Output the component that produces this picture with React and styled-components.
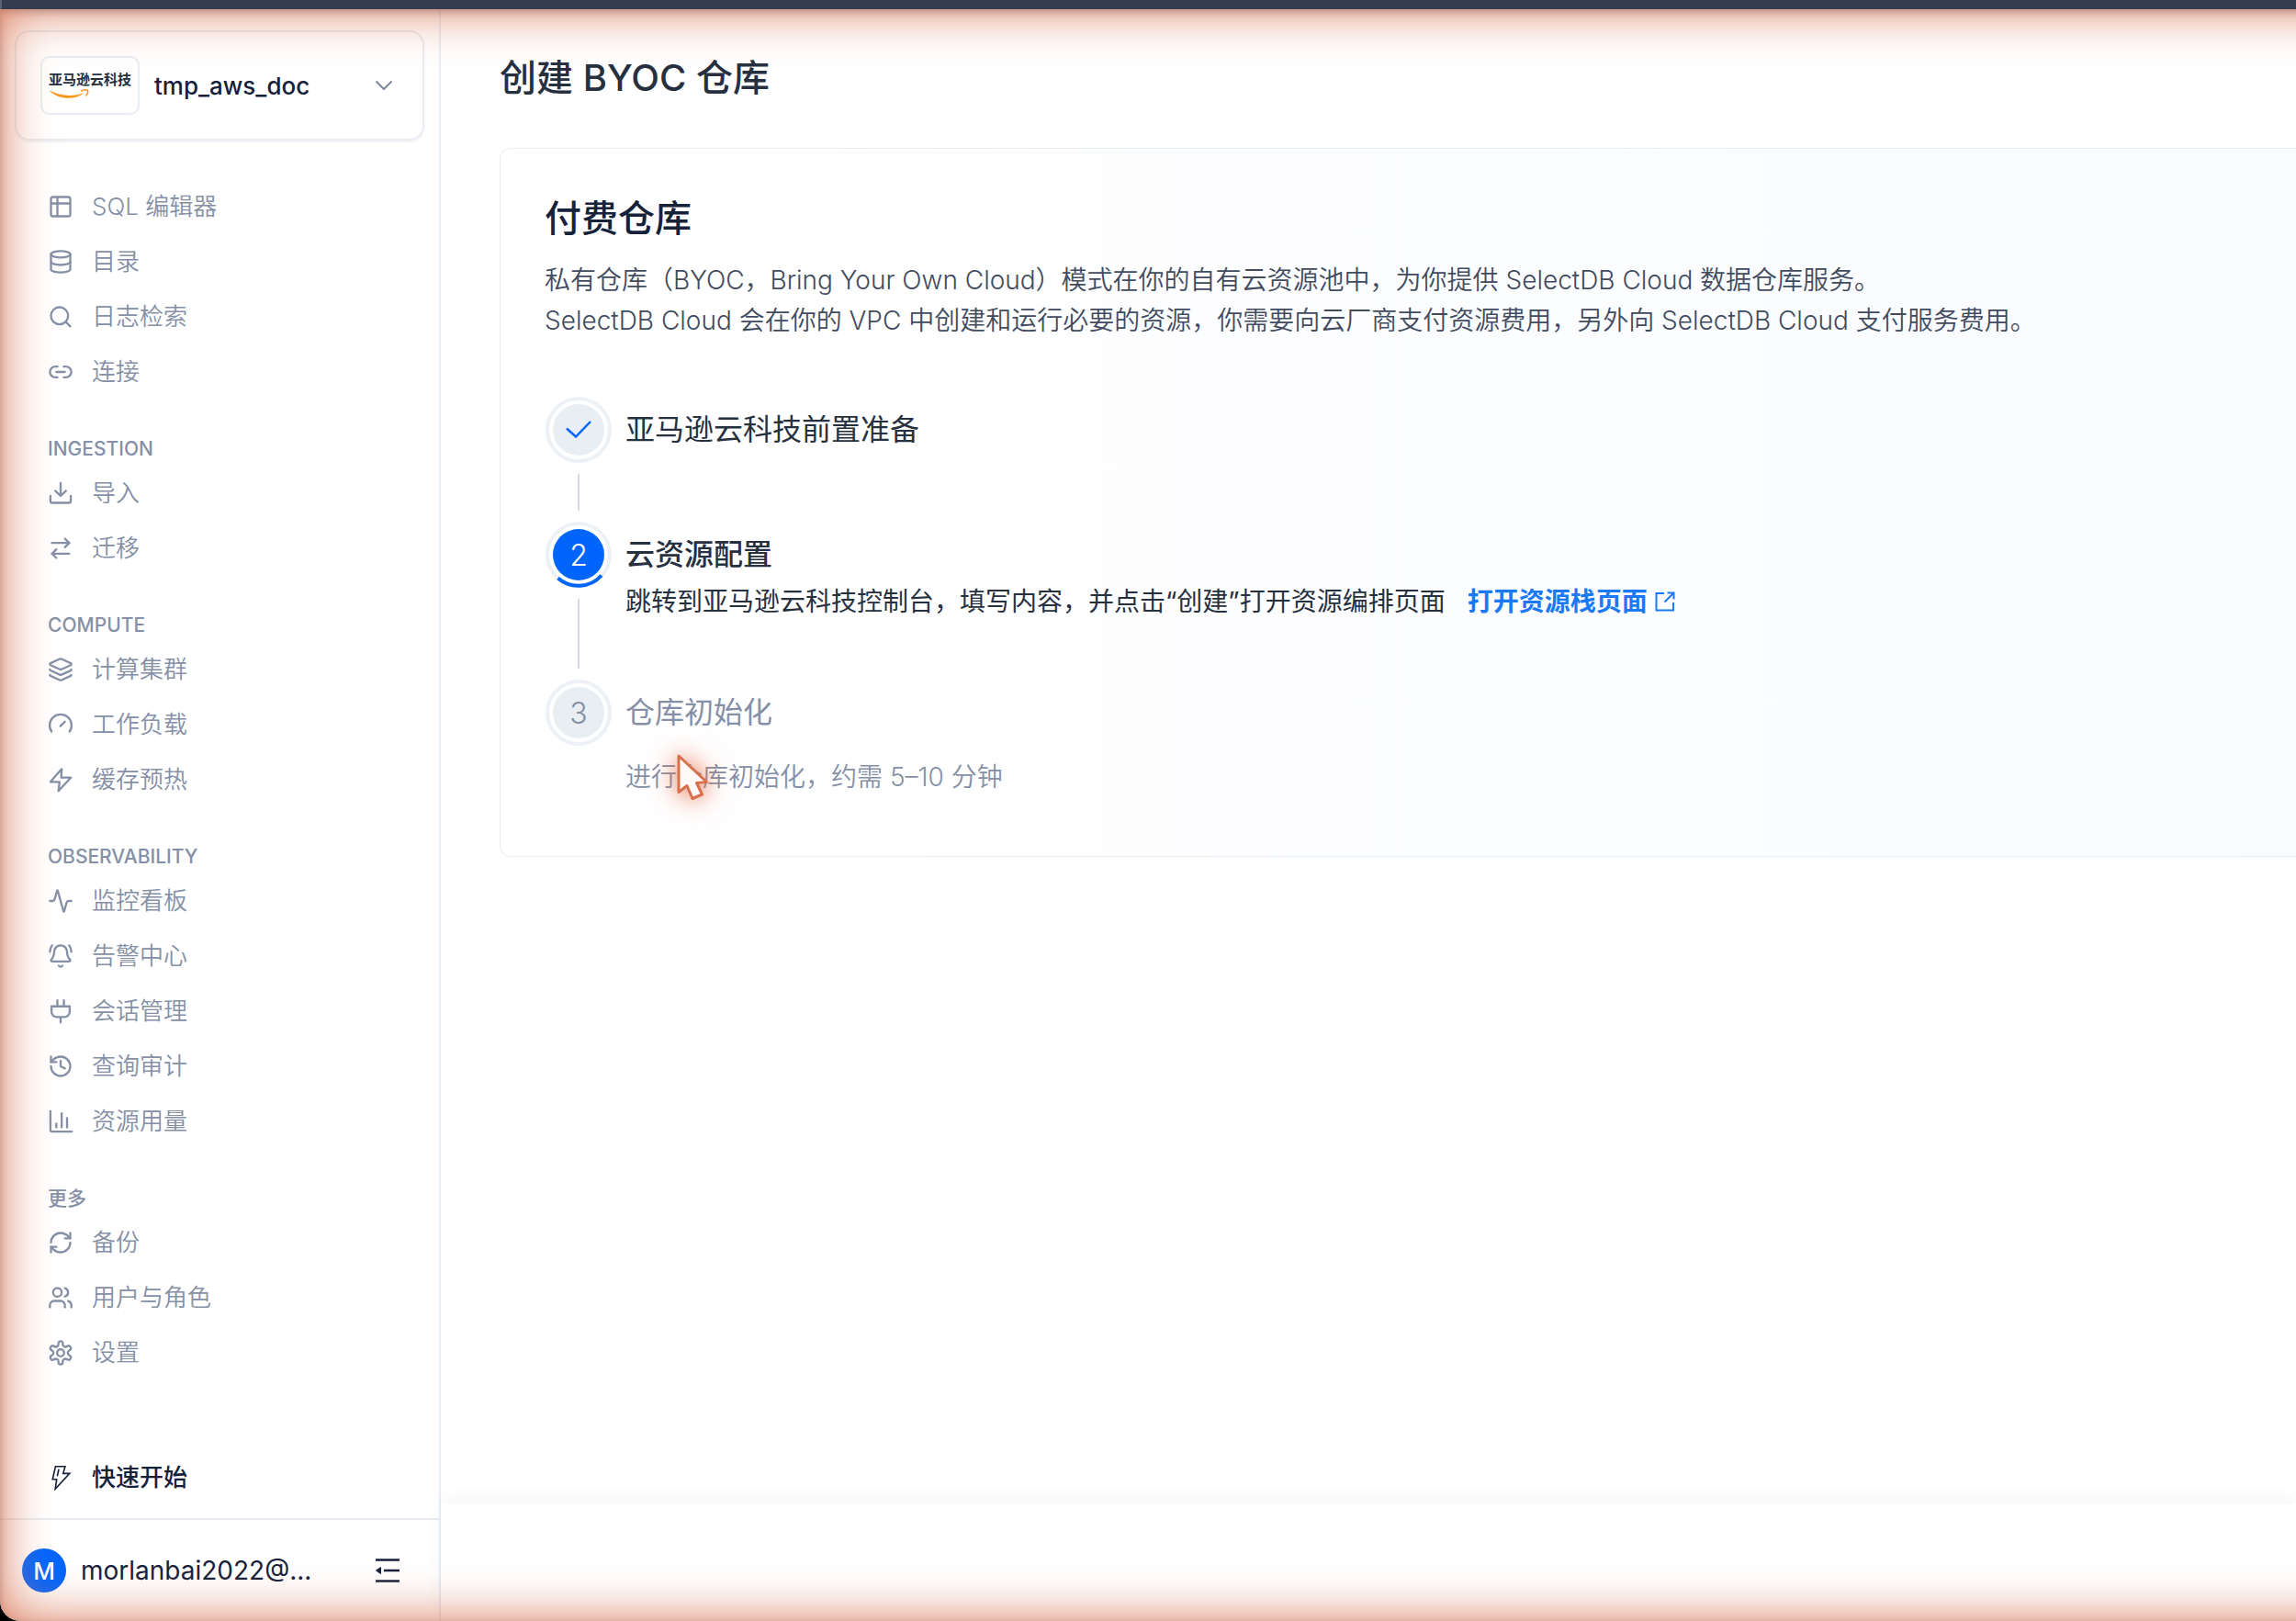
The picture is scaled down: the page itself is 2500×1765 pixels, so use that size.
import React from 'react'
import styled, { createGlobalStyle } from 'styled-components'
import {
  Table2,
  Database,
  Search,
  Link2,
  ArrowRightLeft,
  Layers,
  Activity,
  BellRing,
  History,
  RefreshCw,
  Users,
} from 'lucide-react'

const ACCENT = '#0065fd'
const INK = '#16213a'
const MUTED = '#8590a6'
const LINE = '#e8edf3'

const GlobalStyle = createGlobalStyle`
  * {
    box-sizing: border-box;
  }
  body {
    margin: 0;
    background: #000;
    color: ${INK};
    font-family: Inter, 'Noto Sans CJK SC', sans-serif;
    font-size: 26px;
  }
  h1, h2, h3, p, ul, ol {
    margin: 0;
    padding: 0;
  }
  ul, ol {
    list-style: none;
  }
`

const Page = styled.div`
  min-height: 100vh;
  display: flex;
  flex-direction: column;
`
const TopBar = styled.div`
  height: 10px;
  border-left: 2px solid #596273;
  background: #343d4e;
`
const Window = styled.div`
  position: relative;
  flex: 1;
  display: flex;
  background: #fff;
  border-bottom-left-radius: 22px;
  overflow: hidden;
`
// warm halo around the window, it runs off the right side
const Glow = styled.div`
  position: absolute;
  inset: 0 -80px 0 0;
  border-bottom-left-radius: 22px;
  box-shadow: inset 0 0 56px #d97757, inset 0 3px 8px rgba(52, 61, 78, 0.45);
  pointer-events: none;
`

const Sidebar = styled.aside`
  width: 480px;
  flex-shrink: 0;
  display: flex;
  flex-direction: column;
  border-right: 2px solid ${LINE};
`
const Workspace = styled.button`
  display: flex;
  align-items: center;
  gap: 16px;
  height: 120px;
  margin: 23px 16px 42px;
  padding: 0 32px 0 26px;
  border: 2px solid ${LINE};
  border-radius: 16px;
  background: transparent;
  box-shadow: 0 2px 2px rgba(22, 33, 58, 0.06);
  color: ${INK};
  font: inherit;
  font-weight: 500;
  text-align: left;
`
const WorkspaceName = styled.span`
  flex: 1;
  font-size: 26px;
`
const Vendor = styled.span`
  display: flex;
  flex-direction: column;
  align-items: center;
  justify-content: center;
  width: 108px;
  height: 64px;
  border: 2px solid ${LINE};
  border-radius: 10px;
  background: rgba(255, 255, 255, 0.6);
  font-size: 15px;
  line-height: 20px;
  font-weight: 700;
  color: #252f3e;
`
const Smile = styled.svg`
  width: 90px;
  height: 12px;
`

const Group = styled.div`
  margin-bottom: 36px;
`
const GroupTitle = styled.h3`
  padding: 0 52px;
  font-size: 21px;
  line-height: 36px;
  font-weight: 500;
  color: ${MUTED};
`
const NavLink = styled.a`
  display: flex;
  align-items: center;
  gap: 20px;
  height: 60px;
  padding: 0 52px;
  font-size: 26px;
  line-height: 36px;
  font-weight: ${({ $strong }) => ($strong ? 500 : 350)};
  color: ${({ $strong }) => ($strong ? INK : MUTED)};
  text-decoration: none;

  svg {
    width: 28px;
    height: 28px;
    flex-shrink: 0;
  }
`
const QuickStart = styled.div`
  margin-top: auto;
  margin-bottom: 14px;
`
const Account = styled.div`
  display: flex;
  align-items: center;
  gap: 16px;
  height: 112px;
  padding: 0 42px 0 24px;
  border-top: 2px solid ${LINE};
`
const Avatar = styled.span`
  display: flex;
  align-items: center;
  justify-content: center;
  width: 48px;
  height: 48px;
  border-radius: 50%;
  background: ${ACCENT};
  color: #fff;
  font-size: 26px;
  font-weight: 500;
`
const Email = styled.span`
  flex: 1;
  font-size: 28px;
`
const IconButton = styled.button`
  display: flex;
  padding: 0;
  border: 0;
  background: none;
  color: ${INK};
`

const Main = styled.main`
  flex: 1;
  min-width: 0;
  display: flex;
  flex-direction: column;
`
const Content = styled.div`
  flex: 1;
  padding: 45px 0 0 64px;
`
const PageTitle = styled.h1`
  margin-bottom: 46px;
  font-size: 40px;
  line-height: 60px;
  font-weight: 500;
  color: #26303f;
`
const Panel = styled.section`
  padding: 46px 48px 68px;
  border: 1px solid #e6eef2;
  border-right: 0;
  border-radius: 12px 0 0 12px;
  background: linear-gradient(90deg, #fff 10%, #f9fbff 100%);
`
const PanelTitle = styled.h2`
  margin-bottom: 15px;
  font-size: 40px;
  line-height: 60px;
  font-weight: 500;
`
const Intro = styled.p`
  font-size: 28px;
  line-height: 44px;
  font-weight: 350;
  color: #414b60;
`
const Steps = styled.ol`
  margin-top: 61px;
`
const Step = styled.li`
  display: flex;
  gap: 14px;
`
const StepRail = styled.div`
  width: 74px;
  flex-shrink: 0;
  display: flex;
  flex-direction: column;
  align-items: center;
`
const StepMark = styled.div`
  position: relative;
  display: flex;
  align-items: center;
  justify-content: center;
  width: 72px;
  height: 72px;
  border: 4px solid #edf1f5;
  border-radius: 50%;
`
const StepDot = styled.span`
  display: flex;
  align-items: center;
  justify-content: center;
  width: 56px;
  height: 56px;
  border-radius: 50%;
  background: ${({ $active }) => ($active ? ACCENT : '#e9eef3')};
  color: ${({ $active }) => ($active ? '#fff' : '#8590a6')};
  font-size: 32px;
  font-weight: 350;
`
const StepArc = styled.svg`
  position: absolute;
  inset: -4px;
  width: 72px;
  height: 72px;
`
const StepLine = styled.span`
  flex: 1;
  width: 2px;
  margin: 12px 0;
  background: #d6dbe3;
`
const StepBody = styled.div`
  padding-bottom: ${({ $last }) => ($last ? 0 : 64)}px;
`
const StepTitle = styled.h3`
  font-size: 32px;
  line-height: 72px;
  font-weight: ${({ $state }) => ($state === 'active' ? 500 : 400)};
  color: ${({ $state }) => ($state === 'todo' ? MUTED : '#26303f')};
`
const StepText = styled.p`
  display: flex;
  align-items: center;
  gap: 24px;
  height: 36px;
  font-size: 28px;
  line-height: 30px;
  padding-bottom: 6px;
  color: #26303f;
`
const StepNote = styled.p`
  margin-top: 16px;
  font-size: 28px;
  line-height: 36px;
  font-weight: 350;
  color: ${MUTED};
`
const StackLink = styled.a`
  display: flex;
  align-items: center;
  gap: 8px;
  color: #1a79f5;
  font-weight: 700;
  text-decoration: none;
`
const ActionBar = styled.footer`
  height: 128px;
  box-shadow: 0 -6px 16px rgba(60, 90, 160, 0.05);
`
const Pointer = styled.svg`
  position: absolute;
  left: 730px;
  top: 808px;
  width: 46px;
  height: 58px;
  overflow: visible;
  filter: drop-shadow(0 0 12px rgba(226, 90, 50, 0.75)) drop-shadow(0 0 20px rgba(226, 90, 50, 0.2));
  pointer-events: none;
`

const stroke = {
  viewBox: '0 0 24 24',
  fill: 'none',
  stroke: 'currentColor',
  strokeWidth: 2,
  strokeLinecap: 'round',
  strokeLinejoin: 'round',
}

const ImportIcon = () => (
  <svg {...stroke}>
    <path d="M12 2.5v12M7 9.8l5 4.8 5-4.8M2.5 14.5V19a2 2 0 0 0 2 2h15a2 2 0 0 0 2-2v-4.5" />
  </svg>
)
const GaugeIcon = () => (
  <svg {...stroke}>
    <path d="M3.6 18.4a10.2 10.2 0 1 1 16.8 0M11.8 13.4l4.2-4.2" />
  </svg>
)
const ZapIcon = () => (
  <svg {...stroke}>
    <path d="M13 2 2.5 14H11l-1 8.5L21.5 10H12.6z" />
  </svg>
)
const PlugIcon = () => (
  <svg {...stroke}>
    <path d="M9 7V1.8M15 7V1.8M12 17.5v5M3.5 7.5h17v5a5 5 0 0 1-5 5h-7a5 5 0 0 1-5-5z" />
  </svg>
)
const ChartIcon = () => (
  <svg {...stroke}>
    <path d="M2.5 2.5V20a1.5 1.5 0 0 0 1.5 1.5h18.5M8 17.5V14M13 17.5v-13M18 17.5V9" />
  </svg>
)
// six rounded teeth around a small hub
const GearIcon = () => (
  <svg {...stroke}>
    <path d="M10 3.200a2 2 0 0 1 4 0v.9a2.400 2.400 0 0 0 3.600 2l.8-.4a2 2 0 0 1 2.700.7l.2.300a2 2 0 0 1-.7 2.700l-.6.400a2.500 2.500 0 0 0 0 4.400l.6.400a2 2 0 0 1 .7 2.700l-.2.300a2 2 0 0 1-2.700.7l-.8-.4a2.400 2.400 0 0 0-3.600 2v.9a2 2 0 0 1-4 0v-.9a2.400 2.400 0 0 0-3.600-2l-.8.4a2 2 0 0 1-2.700-.7l-.2-.3a2 2 0 0 1 .7-2.700l.6-.4a2.500 2.500 0 0 0 0-4.400l-.6-.4a2 2 0 0 1-.7-2.700l.2-.3a2 2 0 0 1 2.700-.7l.8.4a2.400 2.400 0 0 0 3.600-2z" />
    <circle cx="12" cy="12" r="3.300" />
  </svg>
)
const QuickIcon = () => (
  <svg {...stroke} strokeWidth={1.4} strokeLinejoin="miter">
    <path d="M7.200 1.500h9l-1.800 6.500h6L7 22.500l1.300-9H4.500zM10.200 4.500 9 10" />
  </svg>
)

const groups = [
  {
    items: [
      ['SQL 编辑器', Table2],
      ['目录', Database],
      ['日志检索', Search],
      ['连接', Link2],
    ],
  },
  {
    title: 'INGESTION',
    items: [
      ['导入', ImportIcon],
      ['迁移', ArrowRightLeft],
    ],
  },
  {
    title: 'COMPUTE',
    items: [
      ['计算集群', Layers],
      ['工作负载', GaugeIcon],
      ['缓存预热', ZapIcon],
    ],
  },
  {
    title: 'OBSERVABILITY',
    items: [
      ['监控看板', Activity],
      ['告警中心', BellRing],
      ['会话管理', PlugIcon],
      ['查询审计', History],
      ['资源用量', ChartIcon],
    ],
  },
  {
    title: '更多',
    items: [
      ['备份', RefreshCw],
      ['用户与角色', Users],
      ['设置', GearIcon],
    ],
  },
]

const SideNav = () => (
  <Sidebar>
    <Workspace type="button">
      <Vendor>
        亚马逊云科技
        <Smile viewBox="0 0 90 12">
          <path d="M0 1C12 7.500 26 9 39 4 28 12.500 11 12 0 1z" fill="#f7981d" />
          <path d="M35 2c3-1.200 6.500-1.300 7.500-.6.500 1.600-.3 4-2 6" fill="none" stroke="#f7981d" strokeWidth="1.600" />
        </Smile>
      </Vendor>
      <WorkspaceName>tmp_aws_doc</WorkspaceName>
      <svg width="20" height="12" viewBox="0 0 20 12" fill="none" stroke="#7c879b" strokeWidth="2">
        <path d="m1.500 1.500 8.500 8.500 8.500-8.500" />
      </svg>
    </Workspace>
    <nav>
      {groups.map(({ title, items }) => (
        <Group key={title || 'top'}>
          {title && <GroupTitle>{title}</GroupTitle>}
          <ul>
            {items.map(([label, Icon]) => (
              <li key={label}>
                <NavLink href="#">
                  <Icon />
                  {label}
                </NavLink>
              </li>
            ))}
          </ul>
        </Group>
      ))}
    </nav>
    <QuickStart>
      <NavLink href="#" $strong>
        <QuickIcon />
        快速开始
      </NavLink>
    </QuickStart>
    <Account>
      <Avatar>M</Avatar>
      <Email>morlanbai2022@...</Email>
      <IconButton type="button" aria-label="collapse">
        <svg width="28" height="28" viewBox="0 0 28 28" fill="none" stroke="currentColor" strokeWidth="2.500">
          <path d="M1 2.500h26M10 14h17M1 25.500h26" />
          <path d="m6.500 10.500-5 3.500 5 3.500z" fill="currentColor" strokeWidth="1" />
        </svg>
      </IconButton>
    </Account>
  </Sidebar>
)

const App = () => (
  <Page>
    <GlobalStyle />
    <TopBar />
    <Window>
      <SideNav />
      <Main>
        <Content>
          <PageTitle>创建 BYOC 仓库</PageTitle>
          <Panel>
            <PanelTitle>付费仓库</PanelTitle>
            <Intro>
              私有仓库（BYOC，Bring Your Own Cloud）模式在你的自有云资源池中，为你提供 SelectDB Cloud 数据仓库服务。
            </Intro>
            <Intro>
              SelectDB Cloud 会在你的 VPC 中创建和运行必要的资源，你需要向云厂商支付资源费用，另外向 SelectDB Cloud
              支付服务费用。
            </Intro>
            <Steps>
              <Step>
                <StepRail>
                  <StepMark>
                    <StepDot>
                      <svg width="30" height="22" viewBox="0 0 30 22" fill="none" stroke={ACCENT} strokeWidth="2.500">
                        <path d="m2 9.500 10 9L28 2" />
                      </svg>
                    </StepDot>
                  </StepMark>
                  <StepLine />
                </StepRail>
                <StepBody>
                  <StepTitle $state="done">亚马逊云科技前置准备</StepTitle>
                </StepBody>
              </Step>
              <Step>
                <StepRail>
                  <StepMark>
                    <StepDot $active>2</StepDot>
                    <StepArc viewBox="0 0 72 72" fill="none" stroke={ACCENT} strokeWidth="4">
                      <path d="M13.500 61.500A34 34 0 0 0 61 58.500" />
                    </StepArc>
                  </StepMark>
                  <StepLine />
                </StepRail>
                <StepBody>
                  <StepTitle $state="active">云资源配置</StepTitle>
                  <StepText>
                    跳转到亚马逊云科技控制台，填写内容，并点击“创建”打开资源编排页面
                    <StackLink href="#">
                      打开资源栈页面
                      <svg width="22" height="22" viewBox="0 0 22 22" fill="none" stroke="currentColor" strokeWidth="2">
                        <path d="M10 2H1.500v18.500H20V12M13.500 1.500h7v7M20 2 10.500 11.500" />
                      </svg>
                    </StackLink>
                  </StepText>
                </StepBody>
              </Step>
              <Step>
                <StepRail>
                  <StepMark>
                    <StepDot>3</StepDot>
                  </StepMark>
                </StepRail>
                <StepBody $last>
                  <StepTitle $state="todo">仓库初始化</StepTitle>
                  <StepNote>进行仓库初始化，约需 5–10 分钟</StepNote>
                </StepBody>
              </Step>
            </Steps>
          </Panel>
        </Content>
        <ActionBar />
      </Main>
      <Pointer viewBox="0 0 46 58">
        <path
          d="M9 5v39.500l9-7 6 14 10.500-4.500-6-12.500 11-1z"
          fill="#fffaf7"
          stroke="#d9704c"
          strokeWidth="3"
          strokeLinejoin="round"
        />
      </Pointer>
      <Glow />
    </Window>
  </Page>
)

export default App
